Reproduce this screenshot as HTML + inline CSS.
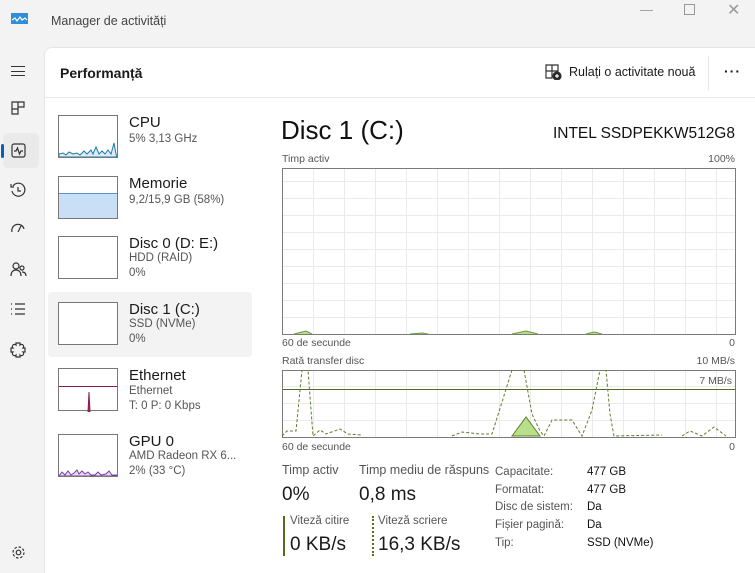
<!DOCTYPE html>
<html><head><meta charset="utf-8"><style>
*{margin:0;padding:0;box-sizing:border-box}
body{width:755px;height:573px;background:#f3f3f3;font-family:"Liberation Sans",sans-serif;position:relative;overflow:hidden;color:#1a1a1a}
.a{position:absolute;white-space:nowrap}
.main{position:absolute;left:44px;top:47px;width:711px;height:526px;background:#fff;border-top-left-radius:8px;border-left:1px solid #e5e5e5;border-top:1px solid #e5e5e5}
.thumb{position:absolute;left:58px;width:60px;height:43px;border:1px solid #777;background:#fff}
.t1{font-size:15px;color:#1a1a1a}
.t2{font-size:11.5px;color:#555}
.g{font-size:10.5px;color:#555}
.grid{background-image:repeating-linear-gradient(90deg,transparent 0 30px,#ebebeb 30px 31px),repeating-linear-gradient(0deg,transparent 0 16px,#ebebeb 16px 17px)}
</style></head><body>
<div class="a" style="left:11px;top:13px;width:17px;height:11px;background:#2f8ed9"></div>
<svg class="a" style="left:11px;top:13px" width="17" height="11"><path d="M1 7 L4 5 L6 8 L9 4 L11 7 L14 5 L16 7" stroke="#fff" stroke-width="1.2" fill="none"/></svg>
<div class="a" style="left:51px;top:14px;font-size:12.5px;color:#444">Manager de activități</div>
<div class="a" style="left:640px;top:2px;font-size:13px;color:#999">—</div>
<div class="a" style="left:684px;top:4px;width:11px;height:11px;border:1px solid #999"></div>
<div class="a" style="left:727px;top:0px;font-size:16px;color:#999">✕</div>
<div class="a" style="left:11px;top:66px;width:14px;height:10px;border-top:1.3px solid #333;border-bottom:1.3px solid #333"></div>
<div class="a" style="left:11px;top:71px;width:14px;height:1.3px;background:#333"></div>
<svg class="a" style="left:11px;top:101px" width="14" height="14" fill="none" stroke="#333" stroke-width="1.2"><path d="M1 1h6v7H1zM7 1h6v5H7zM1 8h6v5H1z"/></svg>
<div class="a" style="left:3px;top:133px;width:36px;height:35px;background:#eaeaea;border-radius:5px"></div>
<div class="a" style="left:1px;top:144px;width:3px;height:14px;background:#0a5fb4;border-radius:2px"></div>
<svg class="a" style="left:11px;top:143px" width="15" height="15" fill="none" stroke="#333" stroke-width="1.2"><rect x="1" y="1" width="13" height="13" rx="2"/><path d="M3 8h2l1.5-3 2 6 1.5-3h2"/></svg>
<svg class="a" style="left:10px;top:182px" width="16" height="16" fill="none" stroke="#333" stroke-width="1.2"><path d="M3 4A6.5 6.5 0 1 1 2 9"/><path d="M1 2v3h3M8 5v4h3"/></svg>
<svg class="a" style="left:10px;top:221px" width="16" height="16" fill="none" stroke="#333" stroke-width="1.2"><path d="M2 11A6 6 0 0 1 14 8M8 11l3-6"/></svg>
<svg class="a" style="left:10px;top:261px" width="17" height="16" fill="none" stroke="#333" stroke-width="1.2"><circle cx="6" cy="5" r="3"/><path d="M1 15c0-4 2-6 5-6s5 2 5 6"/><circle cx="12" cy="7" r="2"/><path d="M12 11c2 0 4 1 4 4"/></svg>
<svg class="a" style="left:10px;top:302px" width="16" height="14" fill="none" stroke="#333" stroke-width="1.2"><path d="M1 2h1M1 7h1M1 12h1M5 2h10M5 7h10M5 12h10"/></svg>
<svg class="a" style="left:10px;top:341px" width="17" height="17" fill="none" stroke="#333" stroke-width="1.2"><path d="M6 2h4v2a2 2 0 0 1 3 3h2v4h-2a2 2 0 0 1-3 3v2H6v-2a2 2 0 0 1-3-3H1V7h2a2 2 0 0 1 3-3z"/></svg>
<svg class="a" style="left:11px;top:545px" width="15" height="15" fill="none" stroke="#333" stroke-width="1.2"><circle cx="7.5" cy="7.5" r="2.3"/><circle cx="7.5" cy="7.5" r="5.5" stroke-dasharray="2.5 1.8"/></svg>

<div class="main"></div>
<div class="a" style="left:60px;top:65px;font-size:14px;font-weight:bold;color:#1a1a1a">Performanță</div>
<svg class="a" style="left:545px;top:64px" width="17" height="16" fill="none" stroke="#333" stroke-width="1.2"><path d="M1 1h6v6H1zM7 1h6v6H7zM1 7h6v7H1z"/><circle cx="12" cy="12" r="4" fill="#222"/><path d="M12 10v4M10 12h4" stroke="#fff"/></svg>
<div class="a" style="left:569px;top:65px;font-size:12.5px">Rulați o activitate nouă</div>
<div class="a" style="left:708px;top:56px;width:1px;height:34px;background:#e5e5e5"></div>
<div class="a" style="left:724px;top:63px;font-size:14px;font-weight:bold;letter-spacing:1px">···</div>
<div class="a" style="left:45px;top:97px;width:710px;height:1px;background:#e8e8e8"></div>

<div class="a" style="left:48px;top:292px;width:204px;height:65px;background:#f3f3f3;border-radius:4px"></div>
<div class="thumb" style="top:115px"><svg width="58" height="41"><path d="M0 38 L4 37 L7 39 L10 36 L14 38 L18 37 L21 39 L25 35 L28 38 L32 34 L34 38 L37 31 L40 38 L43 35 L46 38 L49 34 L52 38 L55 27 L57 38 L58 41 L0 41Z" fill="#dbecf5" stroke="#1d7aa8" stroke-width="1"/></svg></div>
<div class="a t1" style="left:129px;top:114px">CPU</div>
<div class="a t2" style="left:129px;top:133px">5% 3,13 GHz</div>
<div class="thumb" style="top:176px"><div style="position:absolute;left:0;right:0;bottom:0;height:25px;background:#c9dff5;border-top:1px solid #5a8fc8"></div></div>
<div class="a t1" style="left:129px;top:175px">Memorie</div>
<div class="a t2" style="left:129px;top:194px">9,2/15,9 GB (58%)</div>
<div class="thumb" style="top:236px"></div>
<div class="a t1" style="left:129px;top:235px">Disc 0 (D: E:)</div>
<div class="a t2" style="left:129px;top:252px">HDD (RAID)</div>
<div class="a t2" style="left:129px;top:267px">0%</div>
<div class="thumb" style="top:302px"></div>
<div class="a t1" style="left:129px;top:301px">Disc 1 (C:)</div>
<div class="a t2" style="left:129px;top:318px">SSD (NVMe)</div>
<div class="a t2" style="left:129px;top:333px">0%</div>
<div class="thumb" style="top:368px"><div style="position:absolute;left:0;right:0;top:17px;height:1px;background:#8b1c4a"></div><svg style="position:absolute;left:0;top:0" width="58" height="43"><path d="M29 43 L30 23 L31 43Z" fill="#b82c66" stroke="#8b1c4a"/></svg></div>
<div class="a t1" style="left:129px;top:367px">Ethernet</div>
<div class="a t2" style="left:129px;top:385px">Ethernet</div>
<div class="a t2" style="left:129px;top:400px">T: 0 P: 0 Kbps</div>
<div class="thumb" style="top:434px"><svg width="58" height="41"><path d="M0 41 L3 37 L6 40 L9 36 L12 40 L15 38 L18 35 L20 39 L23 36 L26 39 L29 37 L32 40 L36 40 L39 37 L42 40 L47 39 L50 36 L53 40 L58 40 L58 41Z" fill="#e8dcf2" stroke="#7a3fa8"/></svg></div>
<div class="a t1" style="left:129px;top:433px">GPU 0</div>
<div class="a t2" style="left:129px;top:450px">AMD Radeon RX 6...</div>
<div class="a t2" style="left:129px;top:465px">2% (33 °C)</div>

<div class="a" style="left:281px;top:115px;font-size:26px;color:#111">Disc 1 (C:)</div>
<div class="a" style="right:20px;top:125px;font-size:15.5px;color:#111">INTEL SSDPEKKW512G8</div>
<div class="a g" style="left:282px;top:153px">Timp activ</div>
<div class="a g" style="right:20px;top:153px">100%</div>
<div class="a grid" style="left:282px;top:168px;width:454px;height:167px;border:1px solid #7a7a7a"></div>
<svg class="a" style="left:282px;top:168px" width="454" height="167"><path d="M12 166 L24 163 L30 166 M128 166 L140 165 L146 166 M230 166 L244 163 L256 166 M304 166 L312 164 L320 166" stroke="#6a9a3a" fill="#b8de8a"/></svg>
<div class="a g" style="left:282px;top:337px">60 de secunde</div>
<div class="a g" style="right:20px;top:337px">0</div>
<div class="a g" style="left:282px;top:355px">Rată transfer disc</div>
<div class="a g" style="right:20px;top:355px">10 MB/s</div>
<div class="a grid" style="left:282px;top:370px;width:454px;height:68px;border:1px solid #7a7a7a"></div>
<div class="a" style="left:283px;top:389px;width:452px;height:1px;background:#4e6e20"></div>
<div class="a g" style="right:23px;top:375px">7 MB/s</div>
<svg class="a" style="left:282px;top:370px" width="454" height="68"><path d="M0 66 L5 61 L14 61 L20 0 L26 0 L31 66 L38 60 L44 64 L58 59 L66 64 L80 65 M170 66 L180 62 L198 64 L210 64 L230 0 L242 0 L250 44 L258 61 L262 66 L270 50 L290 50 L300 66 L310 40 L318 0 L324 0 L328 44 L332 66 L380 65 M400 66 L408 61 L420 66 L432 57 L444 66" stroke="#5e7e2c" stroke-dasharray="3 2" fill="none"/><path d="M230 66 L244 47 L258 66Z" fill="#b8e08a" stroke="#5e7e2c"/></svg>
<div class="a g" style="left:282px;top:441px">60 de secunde</div>
<div class="a g" style="right:20px;top:441px">0</div>

<div class="a" style="left:282px;top:463px;font-size:12.5px;color:#555">Timp activ</div>
<div class="a" style="left:282px;top:484px;font-size:19px">0%</div>
<div class="a" style="left:359px;top:463px;font-size:12.5px;color:#555">Timp mediu de răspuns</div>
<div class="a" style="left:359px;top:484px;font-size:19px">0,8 ms</div>
<div class="a" style="left:283px;top:516px;width:2px;height:40px;background:#4e6e20"></div>
<div class="a" style="left:290px;top:515px;font-size:11.5px;color:#555">Viteză citire</div>
<div class="a" style="left:290px;top:534px;font-size:19px">0 KB/s</div>
<div class="a" style="left:372px;top:516px;width:0;height:40px;border-left:2px dotted #4e6e20"></div>
<div class="a" style="left:378px;top:515px;font-size:11.5px;color:#555">Viteză scriere</div>
<div class="a" style="left:378px;top:534px;font-size:19px">16,3 KB/s</div>
<div class="a" style="left:495px;top:464px;font-size:11.5px;color:#555;line-height:17.7px">Capacitate:<br>Formatat:<br>Disc de sistem:<br>Fișier pagină:<br>Tip:</div>
<div class="a" style="left:587px;top:464px;font-size:11.5px;color:#111;line-height:17.7px">477 GB<br>477 GB<br>Da<br>Da<br>SSD (NVMe)</div>
</body></html>
